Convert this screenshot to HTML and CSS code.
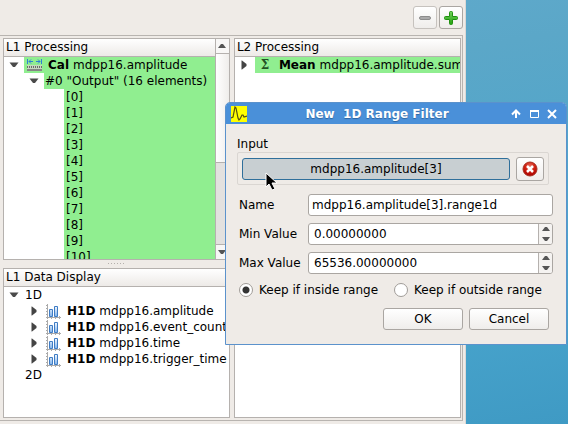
FILE: index.html
```html
<!DOCTYPE html>
<html lang="en">
<head>
<meta charset="utf-8">
<title>Analysis</title>
<link rel="stylesheet" href="styles.css">
</head>
<body>
<svg width="0" height="0" class="defs" aria-hidden="true">
  <defs>
    <linearGradient id="bar" x1="0" x2="0" y1="0" y2="1"><stop offset="0" stop-color="#f4f9ff"/><stop offset="1" stop-color="#7fb2ea"/></linearGradient>
    <radialGradient id="red" cx=".5" cy=".3" r=".7"><stop offset="0" stop-color="#e87060"/><stop offset=".5" stop-color="#d02010"/><stop offset="1" stop-color="#a80000"/></radialGradient>
    <linearGradient id="green" x1="0" x2="0" y1="0" y2="1"><stop offset="0" stop-color="#72d35a"/><stop offset="1" stop-color="#22a010"/></linearGradient>
    <symbol id="hist" viewBox="0 0 16 16">
      <path d="M2.500 1V16M1 14.500H16M1 2.500H2M1 5.500H2M1 8.500H2M1 11.500H2M6.500 15V16M10.500 15V16M14.500 13V16" stroke="#aaa" fill="none"/>
      <path d="M4.500 6.500H7.500V13.500H4.500ZM9.500 3.500H12.500V13.500H9.500Z" fill="url(#bar)" stroke="#3f7cc4"/>
    </symbol>
    <symbol id="down" viewBox="0 0 10 6"><path d="M0.500 0.500H9.500L6 5H4Z" fill="#4a4a4a"/></symbol>
    <symbol id="right" viewBox="0 0 6 10"><path d="M0.500 0.500H1L5.500 4V6L1 9.500H0.500Z" fill="#444"/></symbol>
  </defs>
</svg>
<div class="desktop">
  <main class="window">
    <div class="toolbar">
      <button class="button tool faded" aria-label="Remove"><svg width="14" height="14" viewBox="0 0 14 14"><rect x="1.500" y="5.500" width="11" height="3" rx="1.500" fill="#aaa" stroke="#8c8c8c"/></svg></button>
      <button class="button tool" aria-label="Add"><svg width="14" height="14" viewBox="0 0 14 14"><path d="M5.500 1.500Q5.500.5 6.500.5H7.500Q8.500.5 8.500 1.500V5.500H12.500Q13.500 5.500 13.500 6.500V7.500Q13.500 8.500 12.500 8.500H8.500V12.500Q8.500 13.500 7.500 13.500H6.500Q5.500 13.500 5.500 12.500V8.500H1.500Q.5 8.500.5 7.500V6.500Q.5 5.500 1.500 5.500H5.500Z" fill="url(#green)" stroke="#209010"/></svg></button>
    </div>
    <div class="frame">
      <div class="column">
        <section class="panel split">
          <div class="view">
            <h2>L1 Processing</h2>
            <ul class="tree">
              <li class="row"><span class="toggle"><svg width="10" height="6"><use href="#down"/></svg></span><span class="cell marked"><svg class="icon" width="16" height="16" viewBox="0 0 16 16"><path d="M1.500 2V7M15.500 2V7M3 4.500H7M10 4.500H14M5 2.500L3 4.500L5 6.500M12 2.500L14 4.500L12 6.500" fill="none" stroke="#2f7fd6"/><path d="M1 8H16V14H1Z" fill="#c4d8c0"/><path d="M1 10H16" stroke="#6b6b6b" stroke-width="2" stroke-dasharray="1 1"/><path d="M1 13H16" stroke="#858585" stroke-width="2"/></svg><b>Cal</b> mdpp16.amplitude</span></li>
              <li class="row level1"><span class="toggle"><svg width="10" height="6"><use href="#down"/></svg></span><span class="cell marked">#0 "Output" (16 elements)</span></li>
              <li class="row level3"><span class="cell marked">[0]</span></li>
              <li class="row level3"><span class="cell marked">[1]</span></li>
              <li class="row level3"><span class="cell marked">[2]</span></li>
              <li class="row level3"><span class="cell marked">[3]</span></li>
              <li class="row level3"><span class="cell marked">[4]</span></li>
              <li class="row level3"><span class="cell marked">[5]</span></li>
              <li class="row level3"><span class="cell marked">[6]</span></li>
              <li class="row level3"><span class="cell marked">[7]</span></li>
              <li class="row level3"><span class="cell marked">[8]</span></li>
              <li class="row level3"><span class="cell marked">[9]</span></li>
              <li class="row level3"><span class="cell marked">[10]</span></li>
            </ul>
          </div>
          <div class="scrollbar">
            <span class="arrow"><svg width="8" height="4" viewBox="0 0 8 4"><path d="M0 4L3 0H5L8 4Z" fill="#555"/></svg></span>
            <span class="thumb"></span>
            <span class="trough"></span>
            <span class="arrow"><svg width="8" height="4" viewBox="0 0 8 4"><path d="M0 0L3 4H5L8 0Z" fill="#555"/></svg></span>
          </div>
        </section>
        <div class="grip"></div>
        <section class="panel">
          <h2>L1 Data Display</h2>
          <ul class="tree">
            <li class="row"><span class="toggle"><svg width="10" height="6"><use href="#down"/></svg></span><span class="cell">1D</span></li>
            <li class="row level1"><span class="toggle"><svg width="6" height="10"><use href="#right"/></svg></span><span class="cell"><svg class="icon" width="16" height="16"><use href="#hist"/></svg><b>H1D</b> mdpp16.amplitude</span></li>
            <li class="row level1"><span class="toggle"><svg width="6" height="10"><use href="#right"/></svg></span><span class="cell"><svg class="icon" width="16" height="16"><use href="#hist"/></svg><b>H1D</b> mdpp16.event_counter</span></li>
            <li class="row level1"><span class="toggle"><svg width="6" height="10"><use href="#right"/></svg></span><span class="cell"><svg class="icon" width="16" height="16"><use href="#hist"/></svg><b>H1D</b> mdpp16.time</span></li>
            <li class="row level1"><span class="toggle"><svg width="6" height="10"><use href="#right"/></svg></span><span class="cell"><svg class="icon" width="16" height="16"><use href="#hist"/></svg><b>H1D</b> mdpp16.trigger_time</span></li>
            <li class="row level1"><span class="cell">2D</span></li>
          </ul>
        </section>
      </div>
      <section class="panel">
        <h2>L2 Processing</h2>
        <ul class="tree">
          <li class="row"><span class="toggle"><svg width="6" height="10"><use href="#right"/></svg></span><span class="cell marked"><span class="icon sigma">Σ</span><b>Mean</b> mdpp16.amplitude.sum</span></li>
        </ul>
      </section>
    </div>
  </main>

  <form class="dialog" role="dialog" aria-labelledby="dialog-title">
    <header class="titlebar">
      <svg width="16" height="16" viewBox="0 0 16 16"><path fill="#ff0" d="M0 0H16V16H0Z"/><path d="M0 12L2 11L4 1L5 2L7 12L8 14L9 13L11 9L12 9L13 11L16 10" fill="none" stroke="#555010" stroke-width="1.200"/></svg>
      <h1 id="dialog-title">New  1D Range Filter</h1>
      <div class="controls">
        <button type="button" aria-label="Shade"><svg width="10" height="10" viewBox="0 0 10 10"><path d="M5 1V9M1 5.500L5 1.500L9 5.500" fill="none" stroke="#fff" stroke-width="2"/></svg></button>
        <button type="button" aria-label="Maximize"><svg width="10" height="10" viewBox="0 0 10 10"><path d="M1.500 1.500H9.500V8.500H1.500Z" fill="none" stroke="#fff"/><path d="M1 2H10" stroke="#fff" stroke-width="2"/></svg></button>
        <button type="button" aria-label="Close"><svg width="10" height="10" viewBox="0 0 10 10"><path d="M1 1L9 9M9 1L1 9" stroke="#fff" stroke-width="2"/></svg></button>
      </div>
    </header>
    <div class="content">
      <span class="caption">Input</span>
      <div class="group">
        <button type="button" class="button source">mdpp16.amplitude[3]</button>
        <button type="button" class="button clear" aria-label="Clear input"><svg width="16" height="16" viewBox="0 0 16 16"><circle cx="8" cy="8" r="7" fill="url(#red)" stroke="#a83020"/><path d="M5 5L11 11M11 5L5 11" stroke="#fff" stroke-width="2.500"/></svg></button>
      </div>
      <div class="fields">
        <label for="name">Name</label>
        <input class="field" id="name" type="text" value="mdpp16.amplitude[3].range1d">
        <label for="min">Min Value</label>
        <div class="field spin">
          <input id="min" type="text" value="0.00000000">
          <span class="steps"><button type="button" aria-label="Increase minimum"><svg width="8" height="4" viewBox="0 0 8 4"><path d="M0 4L3 0H5L8 4Z" fill="#555"/></svg></button><button type="button" aria-label="Decrease minimum"><svg width="8" height="4" viewBox="0 0 8 4"><path d="M0 0L3 4H5L8 0Z" fill="#555"/></svg></button></span>
        </div>
        <label for="max">Max Value</label>
        <div class="field spin">
          <input id="max" type="text" value="65536.00000000">
          <span class="steps"><button type="button" aria-label="Increase maximum"><svg width="8" height="4" viewBox="0 0 8 4"><path d="M0 4L3 0H5L8 4Z" fill="#555"/></svg></button><button type="button" aria-label="Decrease maximum"><svg width="8" height="4" viewBox="0 0 8 4"><path d="M0 0L3 4H5L8 0Z" fill="#555"/></svg></button></span>
        </div>
      </div>
      <div class="choices">
        <label><input type="radio" name="keep" checked>Keep if inside range</label>
        <label><input type="radio" name="keep">Keep if outside range</label>
      </div>
      <div class="actions">
        <button type="button" class="button">OK</button>
        <button type="button" class="button">Cancel</button>
      </div>
    </div>
    <svg class="pointer" width="14" height="20" viewBox="0 0 14 20"><path d="M1 1V15L4 12L7 18L10 17L7 11H12Z" fill="#000" stroke="#fff"/></svg>
  </form>
</div>
</body>
</html>
```

FILE: styles.css
```css
* { box-sizing: border-box; }

body {
  margin: 0;
  font: 12px/16px "DejaVu Sans", sans-serif;
  color: #000;
}

button, input { font: inherit; color: inherit; margin: 0; padding: 0; }
h1, h2 { margin: 0; font-size: 12px; }
ul { margin: 0; padding: 0; list-style: none; }
svg { display: block; flex: none; }
.defs { position: absolute; }

.desktop {
  position: relative;
  height: 100vh;
  min-height: 400px;
  padding-right: 18%;
  background: linear-gradient(170deg, #62abce, #5ba7c8 25%, #48a4cc 75%, #3f9ac4);
}

.window {
  display: flex;
  flex-direction: column;
  height: 100%;
  padding: 6px 2px 3px 0;
  border-right: 1px solid #dcd8d5;
  background: #efebe7;
}

.toolbar { display: flex; justify-content: flex-end; gap: 2px; margin-bottom: 6px; }

.button {
  display: flex;
  align-items: center;
  justify-content: center;
  height: 22px;
  border: 1px solid #aaa6a2;
  border-radius: 3px;
  background: linear-gradient(#fff, #efedeb);
}
.tool { width: 24px; height: 23px; }
.faded { border-color: #c6c2be; }

.frame {
  flex: 1;
  min-height: 0;
  display: grid;
  grid-template-columns: minmax(0, 1fr) minmax(0, 1fr);
  gap: 4px;
  padding: 2px 1px 2px 3px;
  border: 1px solid #b8b4b0;
  border-left: 0;
}

.column {
  display: grid;
  grid-template-rows: minmax(0, 37fr) 8px minmax(0, 25fr);
  min-height: 0;
}

.grip {
  width: 17px;
  height: 1px;
  margin: 3px auto 0;
  background: repeating-linear-gradient(90deg, #b4b0ac 0 1px, transparent 1px 3px);
}

.panel {
  min-width: 0;
  overflow: hidden;
  border: 1px solid #b5b1ae;
  background: #fff;
}
.split { display: flex; }
.view { flex: 1; min-width: 0; overflow: hidden; }

.panel h2 {
  height: 18px;
  padding-left: 2px;
  border-bottom: 1px solid #b5b1ae;
  background: linear-gradient(#fff, #edeae7);
  font-weight: normal;
  line-height: 17px;
  white-space: nowrap;
}

.row { display: flex; height: 16px; white-space: nowrap; }
.level1 { padding-left: 20px; }
.level3 { padding-left: 60px; }
.toggle { flex: none; width: 20px; padding-right: 1px; display: grid; place-items: center; }
.cell { flex: 1; display: flex; gap: 4px; min-width: 0; padding-left: 2px; }
.level1 .cell, .tree .cell:not(.marked) { padding-left: 1px; }
.marked { background: #90ee90; }
.icon { flex: none; width: 16px; margin-right: 2px; }
.sigma { text-align: center; color: #245024; font: bold 12px/16px "DejaVu Serif", serif; }

.scrollbar {
  display: flex;
  flex-direction: column;
  width: 14px;
  border-left: 1px solid #b5b1ae;
  background: #f8f7f6;
}
.arrow { flex: none; height: 14px; display: grid; place-items: center; }
.thumb { flex: 4; border: solid #b5b1ae; border-width: 1px 0; background: linear-gradient(90deg, #fff, #efedeb); }
.trough { flex: 3; border-bottom: 1px solid #b5b1ae; background: #e3e1df; }

.dialog {
  position: absolute;
  top: 102px;
  right: 1px;
  width: 342px;
  border: 1px solid #5b92cc;
  border-radius: 5px 5px 0 0;
  background: #efebe7;
}

.titlebar {
  display: flex;
  align-items: center;
  height: 21px;
  padding: 0 9px 0 5px;
  border-radius: 4px 4px 0 0;
  background: #4a90d9;
  color: #fff;
}
.titlebar h1 { flex: 1; padding-right: 4px; text-align: center; white-space: pre; text-shadow: 0 1px 1px #2f659f; }
.controls { display: flex; gap: 8px; }
.controls button { width: 10px; border: 0; background: none; }

.content { padding: 12px 13px 14px 11px; }
.caption { display: block; }

.group {
  display: flex;
  align-items: center;
  gap: 6px;
  height: 33px;
  margin: 0 4px 9px 0;
  padding: 0 4px;
  border: 1px solid #dad6d2;
  border-radius: 2px;
}
.source { flex: 1; border-color: #2f6f9b; background: #c8cfd2; }
.clear { width: 28px; height: 24px; }

.fields {
  display: grid;
  grid-template-columns: 62px 1fr;
  align-items: center;
  gap: 7px;
  padding-left: 2px;
  white-space: nowrap;
}
.fields label { line-height: 22px; }

.field {
  width: 100%;
  height: 22px;
  border: 1px solid #aaa6a2;
  border-radius: 3px;
  background: #fff;
}
input.field { padding: 0 3px; }
.spin { display: flex; overflow: hidden; }
.spin input { flex: 1; min-width: 0; padding: 0 5px; border: 0; background: none; }
.steps { display: grid; width: 14px; border-left: 1px solid #b5b1ae; background: #f5f3f1; }
.steps button { display: grid; place-items: center; border: 0; background: none; }

.choices { display: flex; gap: 16px; margin: 8px 0 10px 2px; white-space: nowrap; }
.choices label { display: flex; align-items: center; gap: 6px; }
.choices input {
  appearance: none;
  width: 14px;
  height: 14px;
  border: 1px solid #a09c98;
  border-radius: 50%;
  background: #fff;
}
.choices input:checked { background: radial-gradient(circle, #333 0 3px, #fff 4px); }

.actions { display: flex; justify-content: flex-end; gap: 6px; padding-right: 4px; }
.actions .button { width: 80px; }

.pointer { position: absolute; left: 39px; top: 69px; }
```
